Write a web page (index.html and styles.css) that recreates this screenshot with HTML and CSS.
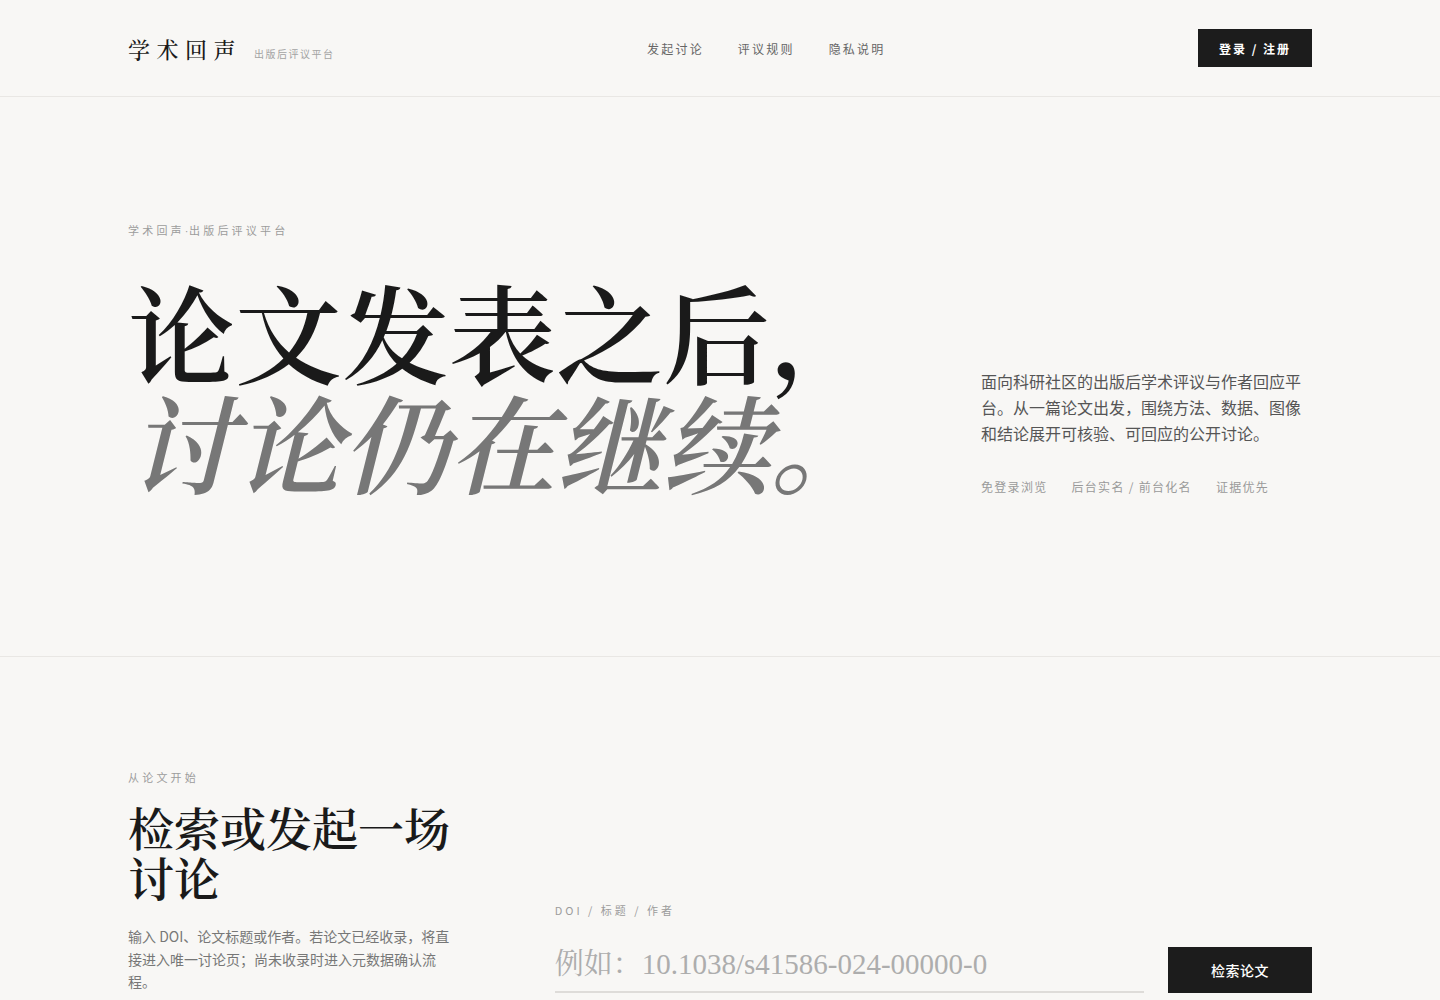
FILE: index.html
```html
<!DOCTYPE html>
<html lang="zh-CN">
<head>
<meta charset="utf-8">
<title>学术回声 · 出版后评议平台</title>
<link rel="stylesheet" href="styles.css">
</head>
<body>
<header class="site-header">
  <div class="container header-inner">
    <div class="brand">
      <span class="brand-name">学术回声</span>
      <span class="brand-sub">出版后评议平台</span>
    </div>
    <nav class="main-nav">
      <a href="#">发起讨论</a>
      <a href="#">评议规则</a>
      <a href="#">隐私说明</a>
    </nav>
    <a class="btn btn-login" href="#">登录 / 注册</a>
  </div>
</header>

<section class="hero">
  <div class="container hero-grid">
    <div class="hero-main">
      <p class="eyebrow">学术回声<span class="dot">·</span>出版后评议平台</p>
      <h1 class="hero-title">
        <span class="line-1">论文发表之后，</span>
        <span class="line-2">讨论仍在继续。</span>
      </h1>
    </div>
    <div class="hero-side">
      <p class="hero-desc">面向科研社区的出版后学术评议与作者回应平台。从一篇论文出发，围绕方法、数据、图像和结论展开可核验、可回应的公开讨论。</p>
      <ul class="tags">
        <li>免登录浏览</li>
        <li>后台实名 / 前台化名</li>
        <li>证据优先</li>
      </ul>
    </div>
  </div>
</section>

<section class="search-section">
  <div class="container search-grid">
    <div class="search-intro">
      <p class="eyebrow">从论文开始</p>
      <h2 class="section-title">检索或发起一场讨论</h2>
      <p class="section-desc">输入 DOI、论文标题或作者。若论文已经收录，将直接进入唯一讨论页；尚未收录时进入元数据确认流程。</p>
    </div>
    <form class="search-form">
      <label class="field-label" for="q">DOI / 标题 / 作者</label>
      <div class="search-row">
        <input id="q" class="search-input" type="text" placeholder="例如：10.1038/s41586-024-00000-0">
        <button class="btn btn-search" type="button">检索论文</button>
      </div>
    </form>
  </div>
</section>
</body>
</html>
```
FILE: styles.css
```css
* { box-sizing: border-box; }

html, body {
  margin: 0;
  padding: 0;
  background: #f8f7f5;
  color: #1a1a1a;
  font-family: "Noto Sans CJK SC", "Noto Sans", sans-serif;
}

a { text-decoration: none; color: inherit; }

.container {
  width: 1184px;
  margin: 0 auto;
}

/* Header */
.site-header {
  border-bottom: 1px solid #e9e7e4;
}

.header-inner {
  height: 96px;
  display: flex;
  align-items: center;
  justify-content: space-between;
}

.brand {
  display: flex;
  align-items: baseline;
  gap: 12px;
}

.brand-name {
  font-family: "Noto Serif CJK SC", "Source Han Serif SC", serif;
  font-size: 22px;
  font-weight: 500;
  letter-spacing: 6.5px;
  color: #1a1a1a;
}

.brand-sub {
  font-size: 10px;
  letter-spacing: 1.5px;
  color: #a3a3a3;
}

.main-nav {
  display: flex;
  gap: 34px;
}

.main-nav a {
  font-size: 12px;
  letter-spacing: 2.2px;
  color: #666;
}

.btn {
  display: inline-flex;
  align-items: center;
  justify-content: center;
  background: #1c1c1c;
  color: #fff;
  border: none;
  font-family: "Noto Sans CJK SC", sans-serif;
  cursor: pointer;
}

.btn-login {
  width: 114px;
  height: 38px;
  font-size: 12px;
  font-weight: 700;
  letter-spacing: 2px;
}

/* Hero */
.hero {
  border-bottom: 1px solid #e9e7e4;
  padding: 125px 0 161px;
}

.hero-grid {
  display: grid;
  grid-template-columns: 1fr 331px;
  align-items: end;
}

.eyebrow {
  margin: 0;
  font-size: 11px;
  letter-spacing: 3.2px;
  color: #9c9c9c;
  line-height: 16px;
}

.eyebrow .dot {
  font-family: "Liberation Sans", sans-serif;
  letter-spacing: 0.5px;
}

.hero-title {
  margin: 36px 0 0;
  font-family: "Noto Serif CJK SC", "Source Han Serif SC", serif;
  font-weight: 600;
  font-size: 107px;
  line-height: 1.03;
  letter-spacing: 0;
}

.hero-title span { display: block; }

.line-1 { color: #1a1a1a; }

.line-2 {
  color: #777;
  font-style: italic;
}

.hero-desc {
  margin: 0;
  font-size: 16px;
  line-height: 26px;
  color: #555;
}

.tags {
  list-style: none;
  margin: 32px 0 0;
  padding: 0;
  display: flex;
  gap: 24px;
}

.tags li {
  font-size: 12px;
  letter-spacing: 1.3px;
  color: #9a9a9a;
}

/* Search section */
.search-section {
  padding: 112px 0 40px;
}

.search-grid {
  display: grid;
  grid-template-columns: 1fr 2fr;
  gap: 48px;
  align-items: end;
}

.search-intro {
  max-width: 330px;
}

.section-title {
  margin: 16px 0 0;
  font-family: "Noto Serif CJK SC", "Source Han Serif SC", serif;
  font-weight: 600;
  font-size: 46px;
  line-height: 50px;
  color: #1a1a1a;
}

.section-desc {
  margin: 24px 0 0;
  font-size: 14px;
  line-height: 22.5px;
  color: #777;
}

.search-form {
  display: flex;
  flex-direction: column;
}

.field-label {
  font-size: 11px;
  letter-spacing: 3px;
  color: #9c9c9c;
  margin-bottom: 29px;
}

.search-row {
  display: flex;
  align-items: flex-end;
  gap: 24px;
}

.search-input {
  flex: 1;
  height: 46px;
  border: none;
  border-bottom: 2px solid #dedcd9;
  background: transparent;
  padding: 0 0 9px;
  font-family: "Liberation Serif", "Noto Serif CJK SC", serif;
  font-size: 29px;
  color: #333;
  outline: none;
}

.search-input::placeholder {
  color: #adadad;
}

.btn-search {
  width: 144px;
  height: 46px;
  font-size: 14px;
  font-weight: 500;
  letter-spacing: 0.5px;
}
```
